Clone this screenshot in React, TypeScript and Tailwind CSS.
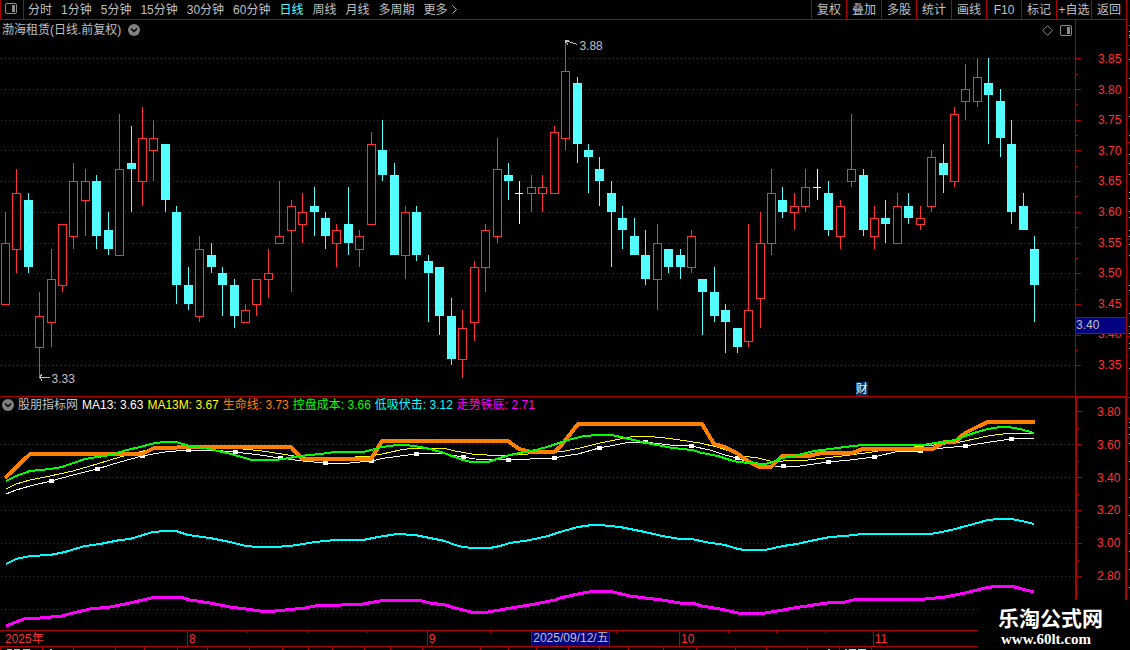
import clsx from "clsx";

const periods = ["分时", "1分钟", "5分钟", "15分钟", "30分钟", "60分钟", "日线", "周线", "月线", "多周期"];
const tools = ["复权", "叠加", "多股", "统计", "画线", "F10", "标记", "+自选", "返回"];

// open, high, low, close (in cents)
const candles = [
  [345, 360, 345, 355], [354, 367, 350, 363], [362, 363, 350, 351], [338, 347, 333, 343],
  [342, 354, 338, 349], [348, 358, 347, 358], [356, 368, 354, 365], [362, 367, 356, 365],
  [365, 366, 354, 356], [357, 360, 353, 354], [353, 376, 353, 367], [368, 374, 360, 367],
  [365, 377, 361, 372], [370, 375, 365, 372], [371, 371, 360, 362], [360, 361, 345, 348],
  [348, 351, 344, 345], [343, 356, 342, 354], [353, 355, 350, 351], [350, 351, 343, 348],
  [348, 349, 341, 343], [342, 345, 342, 344], [345, 349, 343, 349], [349, 354, 346, 350],
  [355, 365, 355, 356], [357, 362, 347, 361], [358, 363, 355, 360], [361, 364, 356, 360],
  [359, 360, 354, 356], [355, 358, 351, 357], [358, 364, 353, 355], [354, 357, 351, 356],
  [358, 373, 358, 371], [370, 375, 365, 366], [366, 368, 353, 353], [353, 361, 349, 360],
  [360, 361, 352, 353], [352, 353, 342, 350], [351, 351, 340, 343], [343, 346, 335, 336],
  [336, 344, 333, 341], [342, 352, 339, 351], [351, 358, 347, 357], [356, 372, 355, 367],
  [366, 368, 362, 365], [363, 365, 358, 363], [363, 366, 360, 364], [363, 366, 360, 364],
  [363, 374, 363, 373], [372, 388, 370, 383], [381, 382, 368, 371], [370, 371, 363, 369],
  [367, 369, 361, 365], [363, 365, 351, 360], [359, 361, 354, 357], [356, 359, 353, 353],
  [353, 357, 348, 349], [349, 358, 344, 355], [354, 354, 350, 351], [353, 354, 349, 351],
  [351, 357, 350, 356], [349, 349, 340, 347], [347, 351, 342, 343], [344, 345, 337, 342],
  [341, 341, 337, 338], [339, 358, 338, 344], [346, 360, 341, 355], [355, 367, 353, 363],
  [362, 364, 359, 360], [360, 363, 357, 361], [361, 367, 360, 364], [364, 367, 362, 364],
  [363, 365, 356, 357], [356, 362, 354, 361], [365, 376, 364, 367], [366, 367, 356, 357],
  [356, 361, 354, 359], [359, 362, 355, 358], [355, 363, 355, 361], [361, 363, 358, 359],
  [358, 361, 357, 359], [361, 370, 360, 369], [368, 371, 363, 366], [365, 377, 364, 376],
  [378, 384, 375, 380], [378, 385, 377, 382], [381, 385, 371, 379], [378, 380, 369, 372],
  [371, 375, 358, 360], [361, 363, 357, 357], [354, 356, 342, 348],
];

const priceLabels = [385, 380, 375, 370, 365, 360, 355, 350, 345, 340, 335];
const indicatorLabels = ["3.80", "3.60", "3.40", "3.20", "3.00", "2.80"];

const legend = [
  { text: "MA13: 3.63", color: "text-white" },
  { text: "MA13M: 3.67", color: "text-[#ffff00]" },
  { text: "生命线: 3.73", color: "text-[#ff8000]" },
  { text: "控盘成本: 3.66", color: "text-[#00ff00]" },
  { text: "低吸伏击: 3.12", color: "text-[#00ffff]" },
  { text: "走势铁底: 2.71", color: "text-[#ff00ff]" },
];

const lines = [
  {
    color: "#ffffff",
    width: 1,
    points:
      "6,97 16,93 30,89 51,84 73,78 97,72 120,65 142,59 165,55 188,53 210,53 235,55 260,58 280,61 303,64 325,66 350,66 371,64 385,61 416,57 440,56 450,58 463,60 475,62 508,63 530,62 554,61 565,59 578,57 599,51 615,48 630,45 645,45 670,48 691,49 710,53 725,58 737,61 750,66 775,69 800,69 828,65 850,63 874,60 895,55 920,54 943,51 965,49 990,45 1011,42 1034,41",
  },
  {
    color: "#ffff00",
    width: 1,
    points:
      "6,92 16,87 30,83 50,79 73,74 97,67 120,60 143,54 165,50 190,48 220,50 243,52 262,54 288,58 300,60 330,61 355,60 371,59 382,57 400,53 415,51 443,51 455,54 472,57 487,58 508,58 528,57 550,56 565,54 580,51 600,46 615,43 630,40 645,39 665,41 680,43 700,46 717,50 732,55 742,59 758,61 770,64 783,64 808,63 825,61 850,58 865,56 885,53 902,50 914,50 955,46 965,44 988,39 1010,36 1034,36",
  },
  {
    color: "#ff8000",
    width: 4,
    points:
      "5,81 30,57 142,57 154,51 165,51 190,50 291,50 302,62 371,62 382,44 508,44 519,52 531,55 554,55 560,50 578,27 702,27 714,47 725,50 738,57 749,65 760,70 771,70 782,59 808,59 822,56 852,56 863,52 933,52 944,45 955,45 965,36 977,30 988,25 1035,25",
  },
  {
    color: "#00ff00",
    width: 2,
    points:
      "6,84 16,79 30,74 50,72 62,70 85,62 110,58 127,53 140,50 155,46 165,45 176,45 190,49 210,52 231,57 252,63 275,63 283,62 300,59 320,57 335,55 363,55 371,53 382,50 397,48 407,48 420,50 430,52 441,55 452,59 463,63 471,65 488,65 500,61 510,58 520,56 536,53 550,49 562,45 572,42 584,39 599,38 612,38 625,41 642,45 657,48 673,51 692,53 702,56 718,59 730,63 738,65 750,66 765,67 773,65 782,61 798,58 814,54 830,52 845,50 863,48 923,48 935,46 955,43 965,39 977,35 988,32 1000,30 1008,30 1020,32 1034,36",
  },
  {
    color: "#00ffff",
    width: 2,
    points:
      "6,167 16,162 30,159 50,158 65,155 85,149 100,147 120,143 130,142 143,138 153,135 165,134 176,134 188,138 210,141 230,145 246,149 258,150 275,150 290,149 303,147 315,145 335,143 363,143 378,140 397,137 415,138 430,141 445,144 455,148 463,150 472,151 490,151 500,149 510,146 530,143 548,139 560,135 578,130 592,128 600,128 620,130 635,133 645,135 662,139 680,142 692,142 705,145 725,148 738,152 745,153 765,153 783,149 797,147 810,144 830,140 845,139 863,137 930,137 942,135 955,132 970,128 988,123 998,122 1011,122 1022,124 1034,127",
  },
  {
    color: "#ff00ff",
    width: 3,
    points:
      "6,229 16,225 27,221 40,221 62,219 73,216 90,212 110,210 130,206 143,203 155,200 165,200 180,200 190,203 210,206 230,210 246,212 260,214 275,214 285,213 305,211 320,208 341,208 348,207 363,207 380,204 390,203 418,203 430,206 445,208 455,211 471,215 488,215 500,213 517,210 535,207 555,203 560,201 578,197 595,194 613,195 630,199 645,201 662,203 680,206 692,206 702,209 720,212 738,216 750,217 765,216 783,213 800,210 827,206 845,205 857,202 925,202 945,200 965,196 985,191 998,189 1011,189 1022,192 1034,195",
  },
];

const markers = [
  [51, 84], [97, 72], [142, 59], [188, 53], [235, 55], [280, 61], [325, 66], [371, 64],
  [416, 57], [463, 60], [508, 63], [554, 61], [599, 51], [645, 45], [691, 49], [737, 61],
  [783, 69], [828, 65], [874, 60], [920, 54], [965, 49], [1011, 42],
];

const months = [
  { label: "2025年", size: "w-[16.6%] pl-[5px]" },
  { label: "8", size: "w-[21.3%] border-l pl-px" },
  { label: "9", size: "w-[22.4%] border-l pl-px" },
  { label: "10", size: "w-[17.2%] border-l pl-px" },
  { label: "11", size: "flex-1 border-l pl-px" },
];

const weekTicks = [247, 307, 367, 490, 616, 728, 776, 825];
const footerTicks = [
  0, 42, 73, 115, 144, 177, 207, 249, 282, 308, 332, 364, 390, 422, 480, 508, 536, 568, 599, 628,
  663, 696, 735, 766, 807, 839, 871,
];
const stripTicks = [25, 45, 142, 239, 336, 397, 418, 437];
const stripDots = [
  31, 35, 37, 59, 78, 97, 116, 135, 154, 163, 174, 192, 198, 211, 217, 230, 236, 244, 255, 285,
  290, 313, 326, 333, 343, 348, 368, 422, 427, 434, 443, 461, 479, 497, 515, 533, 551, 569, 587,
];

const priceY = (p: number) => Math.round(38.3 + (385 - p) * 6.14);
const candleX = (i: number) => Math.round(4.77 + i * 11.4367);

function Candle({ index, data }: { index: number; data: number[] }) {
  const [open, high, low, close] = data;
  const x = candleX(index);
  const top = priceY(Math.max(open, close));
  const bottom = priceY(Math.min(open, close));
  const yHigh = priceY(high);
  const yLow = priceY(low);

  if (open === close) {
    return (
      <g fill="#ffffff">
        <rect x={x} y={yHigh} width={1} height={yLow - yHigh} />
        <rect x={x - 4} y={top} width={8} height={1} />
      </g>
    );
  }
  if (close < open) {
    return (
      <g fill="#54ffff">
        <rect x={x} y={yHigh} width={1} height={yLow - yHigh} />
        <rect x={x - 4} y={top} width={9} height={bottom - top} />
      </g>
    );
  }
  return (
    <g>
      <rect x={x} y={yHigh} width={1} height={yLow - yHigh} fill="#ff3232" />
      <rect
        x={x - 3.5}
        y={top + 0.5}
        width={8}
        height={bottom - top}
        fill="#000000"
        stroke="#ff3232"
      />
    </g>
  );
}

function GridLines({ rows }: { rows: number[] }) {
  return (
    <g stroke="#b00000" strokeDasharray="1 3">
      {rows.map((y) => (
        <line key={y} x1={1} x2={1075} y1={y + 0.5} y2={y + 0.5} />
      ))}
    </g>
  );
}

function AxisTicks({ major, minor }: { major: number[]; minor: number[] }) {
  return (
    <svg className="absolute left-0 top-0 h-full w-1.5" fill="#b00000" shapeRendering="crispEdges">
      {major.map((y) => (
        <rect key={y} y={y} width={5} height={1} />
      ))}
      {minor.map((y) => (
        <rect key={y} y={y} width={2} height={1} />
      ))}
    </svg>
  );
}

function CircleChevron() {
  return (
    <svg width="12" height="12" viewBox="0 0 12 12">
      <circle cx="6" cy="6" r="6" fill="#808080" />
      <path d="M3 4.5 6 7.5 9 4.5" fill="none" stroke="#000000" strokeWidth="1.4" />
    </svg>
  );
}

function PanelIcon() {
  return (
    <svg width="12" height="11" viewBox="0 0 12 11">
      <rect x="0.5" y="0.5" width="11" height="10" rx="1.5" fill="none" stroke="#8c8c8c" />
      <rect x="7" y="2" width="3" height="7" fill="#8c8c8c" />
    </svg>
  );
}

function Toolbar() {
  return (
    <nav className="flex h-5 justify-between border-b border-[#b00000]">
      <div className="flex items-stretch">
        <button
          aria-label="面板"
          className="flex w-6 items-center border-x border-[#b00000] pb-0.5 pl-1"
        >
          <PanelIcon />
        </button>
        <div className="flex items-center gap-[9px] pl-1">
          {periods.map((p) => (
            <button key={p} className={clsx("whitespace-nowrap", p === "日线" && "text-[#54ffff]")}>
              {p}
            </button>
          ))}
          <button className="flex items-center gap-1 whitespace-nowrap">
            更多
            <svg width="5" height="9" viewBox="0 0 5 9" fill="none" stroke="#c0c0c0">
              <path d="M0.5 0.5 4.5 4.5 0.5 8.5" />
            </svg>
          </button>
        </div>
      </div>
      <div className="flex">
        {tools.map((t) => (
          <button key={t} className="w-[35px] whitespace-nowrap border-l border-[#b00000]">
            {t}
          </button>
        ))}
      </div>
    </nav>
  );
}

function PricePanel() {
  return (
    <section className="flex border-b border-[#b00000]">
      <div className="relative min-w-0 flex-1">
        <svg
          className="block h-[376px] w-full"
          viewBox="0 0 1075 376"
          preserveAspectRatio="none"
          shapeRendering="crispEdges"
        >
          <GridLines rows={priceLabels.map(priceY)} />
          {candles.map((c, i) => (
            <Candle key={i} index={i} data={c} />
          ))}
          <g stroke="#c0c0c0" fill="none">
            <path d="M565.5 23V20.5H569M566 20.5 577 24.5M566 21 568 24.5" />
            <path d="M39 357.5H50M42 354.5 39.5 357.5 42 360.5" />
          </g>
        </svg>
        <header className="absolute inset-x-0 top-0 flex h-5 items-center justify-between pl-0.5 pr-[3px]">
          <h1 className="flex items-center gap-[7px]">
            渤海租赁(日线.前复权)
            <button aria-label="展开">
              <CircleChevron />
            </button>
          </h1>
          <div className="flex items-center gap-[7px]">
            <svg width="11" height="11" viewBox="0 0 11 11" fill="none" stroke="#8c8c8c">
              <path d="M5.5 0.7 10.3 5.5 5.5 10.3 0.7 5.5Z" />
            </svg>
            <PanelIcon />
          </div>
        </header>
        <span className="absolute left-[53.9%] top-[19px]">3.88</span>
        <span className="absolute left-[4.8%] top-[352px]">3.33</span>
        <span className="absolute left-[79.6%] top-[362px] bg-[#003264] text-white">财</span>
      </div>
      <div className="relative flex w-[51px] flex-col justify-between border-l border-[#b00000] pb-6 pl-[22px] pt-8 text-[#ff3232]">
        <AxisTicks
          major={priceLabels.map(priceY)}
          minor={priceLabels.slice(0, 10).map((p) => priceY(p - 2.5))}
        />
        {priceLabels.map((p) => (
          <span key={p}>{(p / 100).toFixed(2)}</span>
        ))}
        <span className="absolute inset-x-0 top-[297px] h-[17px] border-y border-[#b00000] bg-[#000080] text-[#c0c0c0]">
          3.40
        </span>
      </div>
    </section>
  );
}

function IndicatorPanel() {
  return (
    <section className="flex border-b border-[#b00000]">
      <div className="relative min-w-0 flex-1">
        <svg
          className="block h-[233px] w-full"
          viewBox="0 0 1075 233"
          preserveAspectRatio="none"
          shapeRendering="crispEdges"
        >
          <GridLines rows={[47, 80, 113, 146, 179, 212]} />
          {lines.map((l, i) => (
            <g key={l.color}>
              <polyline
                points={l.points}
                fill="none"
                stroke={l.color}
                strokeWidth={l.width}
                strokeLinejoin="round"
              />
              {i === 0 &&
                markers.map(([x, y]) => (
                  <rect key={x} x={x - 2} y={y - 2} width={5} height={4} fill="#ffffff" />
                ))}
            </g>
          ))}
        </svg>
        <header className="absolute inset-x-0 top-0 flex h-4 items-center gap-1 whitespace-nowrap pl-0.5">
          <button aria-label="展开">
            <CircleChevron />
          </button>
          <h2>股朋指标网</h2>
          {legend.map((l) => (
            <span key={l.text} className={l.color}>
              {l.text}
            </span>
          ))}
        </header>
      </div>
      <div className="relative flex w-[51px] flex-col justify-between border-l-2 border-r border-t border-[#b00000] pb-[47px] pl-5 pt-[7px] text-[#ff3232]">
        <AxisTicks major={[13, 46, 79, 112, 145, 178]} minor={[30, 63, 96, 129, 162, 195]} />
        {indicatorLabels.map((l) => (
          <span key={l}>{l}</span>
        ))}
      </div>
    </section>
  );
}

function TimeAxis() {
  return (
    <div className="relative flex h-4 border-b border-[#b00000] text-[#ff3232]">
      {months.map((m) => (
        <span key={m.label} className={clsx("border-[#b00000] pt-px", m.size)}>
          {m.label}
        </span>
      ))}
      <svg
        className="absolute left-0 top-0 h-0.5 w-full"
        viewBox="0 0 1126 2"
        preserveAspectRatio="none"
        fill="#b00000"
      >
        {weekTicks.map((x) => (
          <rect key={x} x={x} width={1} height={2} />
        ))}
      </svg>
      <time className="absolute left-[47.2%] top-0 h-[15px] w-[79px] border-x border-[#b00000] bg-[#000080] text-center text-[#c0c0c0]">
        2025/09/12/五
      </time>
    </div>
  );
}

export default function App() {
  return (
    <div className="relative flex bg-black font-['Liberation_Sans','Noto_Sans_CJK_SC',sans-serif] text-[12px] leading-[14px] text-[#c0c0c0]">
      <main className="min-w-0 flex-1">
        <Toolbar />
        <PricePanel />
        <IndicatorPanel />
        <TimeAxis />
        <svg
          className="block h-[3px] w-full"
          viewBox="0 0 1126 3"
          preserveAspectRatio="none"
          shapeRendering="crispEdges"
        >
          {footerTicks.map((x) => (
            <rect key={x} x={x} width={1} height={3} fill="#b00000" />
          ))}
          <path d="M7 2.5H12M14 2.5H20M23 2.5H30M50 2.5H52M828 2.5H830" stroke="#c0c0c0" />
          <path d="M845 2.5H847M849 2.5H856M858 2.5H866" stroke="#54ffff" />
        </svg>
      </main>
      <aside className="w-1 border-l border-[#b00000]">
        <svg className="block h-full w-[3px]" shapeRendering="crispEdges">
          {stripTicks.map((y) => (
            <rect key={y} y={y} width={3} height={1} fill="#b00000" />
          ))}
          {stripDots.map((y) => (
            <rect key={y} x={2} y={y} width={1} height={1} fill="#c0c0c0" />
          ))}
        </svg>
      </aside>
      <div className="absolute bottom-0 right-0 flex h-[50px] w-[152px] flex-col items-start bg-black pl-5 pt-2 text-white">
        <strong className="text-[21px] leading-[22px]">乐淘公式网</strong>
        <a
          href="http://www.60lt.com"
          className="pl-[3px] font-['Liberation_Serif',serif] text-[15px] font-bold leading-[18px]"
        >
          www.60lt.com
        </a>
      </div>
    </div>
  );
}
